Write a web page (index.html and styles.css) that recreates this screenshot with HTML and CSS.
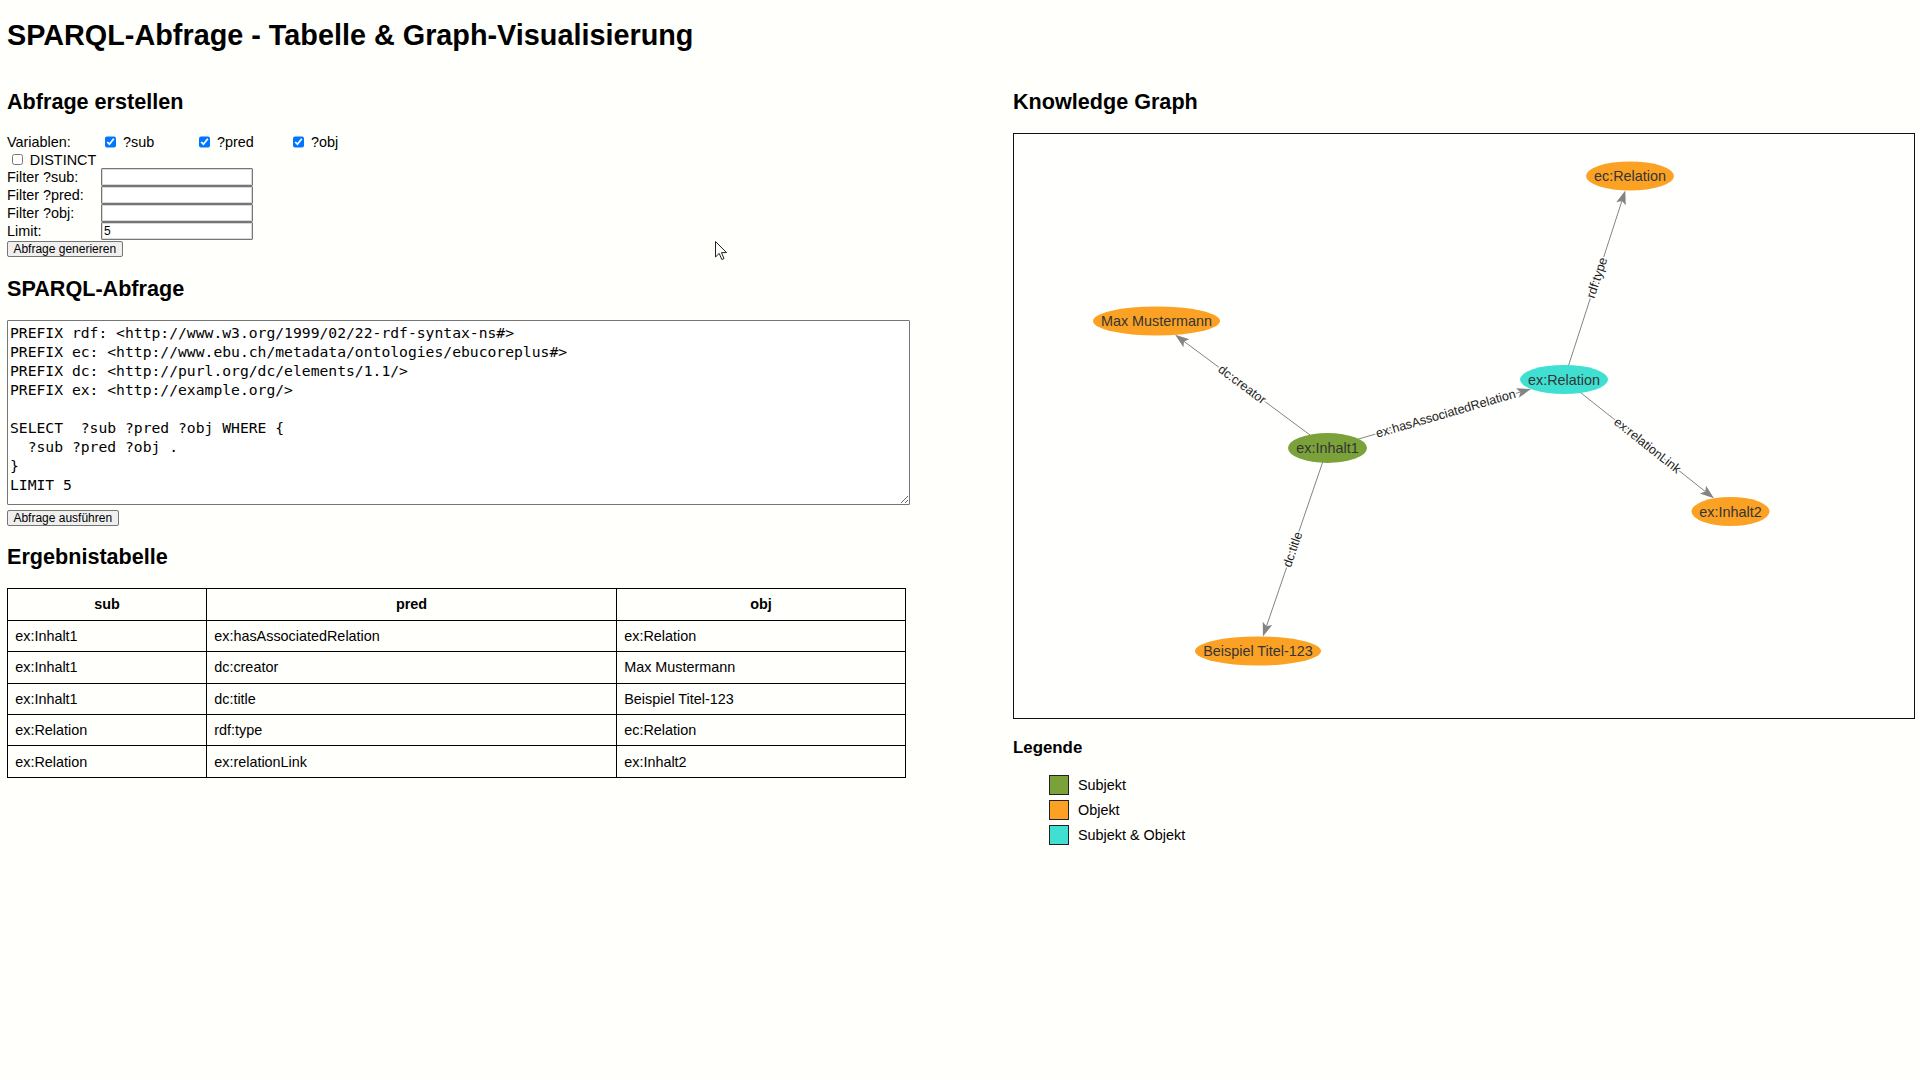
FILE: index.html
```html
<!DOCTYPE html>
<html lang="de">
<head>
<meta charset="utf-8">
<title>SPARQL-Abfrage - Tabelle &amp; Graph-Visualisierung</title>
<link rel="stylesheet" href="styles.css">
</head>
<body>
<h1 class="title">SPARQL-Abfrage - Tabelle &amp; Graph-Visualisierung</h1>
<div class="main">
  <div class="left">
    <h2 class="sec">Abfrage erstellen</h2>
    <div class="form">
      <div class="row row-vars">
        <span class="lbl">Variablen:</span>
        <label class="var"><input type="checkbox" class="cb" checked> ?sub</label>
        <label class="var"><input type="checkbox" class="cb" checked> ?pred</label>
        <label class="var"><input type="checkbox" class="cb" checked> ?obj</label>
      </div>
      <div class="row row-distinct">
        <label class="dist"><input type="checkbox" class="cb"> DISTINCT</label>
      </div>
      <div class="row row-input"><span class="lbl">Filter ?sub:</span><input type="text" class="txt"></div>
      <div class="row row-input"><span class="lbl">Filter ?pred:</span><input type="text" class="txt"></div>
      <div class="row row-input"><span class="lbl">Filter ?obj:</span><input type="text" class="txt"></div>
      <div class="row row-input"><span class="lbl">Limit:</span><input type="text" class="txt" value="5"></div>
      <button class="btn btn-gen">Abfrage generieren</button>
    </div>

    <h2 class="sec">SPARQL-Abfrage</h2>
    <textarea class="query" spellcheck="false">PREFIX rdf: &lt;http://www.w3.org/1999/02/22-rdf-syntax-ns#&gt;
PREFIX ec: &lt;http://www.ebu.ch/metadata/ontologies/ebucoreplus#&gt;
PREFIX dc: &lt;http://purl.org/dc/elements/1.1/&gt;
PREFIX ex: &lt;http://example.org/&gt;

SELECT  ?sub ?pred ?obj WHERE {
  ?sub ?pred ?obj .
}
LIMIT 5</textarea>
    <button class="btn btn-run">Abfrage ausführen</button>

    <h2 class="sec">Ergebnistabelle</h2>
    <table class="results">
      <colgroup><col class="c1"><col class="c2"><col class="c3"></colgroup>
      <thead>
        <tr><th>sub</th><th>pred</th><th>obj</th></tr>
      </thead>
      <tbody>
        <tr><td>ex:Inhalt1</td><td>ex:hasAssociatedRelation</td><td>ex:Relation</td></tr>
        <tr><td>ex:Inhalt1</td><td>dc:creator</td><td>Max Mustermann</td></tr>
        <tr><td>ex:Inhalt1</td><td>dc:title</td><td>Beispiel Titel-123</td></tr>
        <tr><td>ex:Relation</td><td>rdf:type</td><td>ec:Relation</td></tr>
        <tr><td>ex:Relation</td><td>ex:relationLink</td><td>ex:Inhalt2</td></tr>
      </tbody>
    </table>
  </div>

  <div class="right">
    <h2 class="sec">Knowledge Graph</h2>
    <div class="graph">
      <svg class="graph-svg" viewBox="0 0 900 584" width="900" height="584">
        <g class="edges">
          <line x1="313.5" y1="314" x2="506.4" y2="258.1"/>
          <line x1="313.5" y1="314" x2="170" y2="207.4"/>
          <line x1="313.5" y1="314" x2="252.5" y2="492.2"/>
          <line x1="550" y1="245.5" x2="607.9" y2="66.9"/>
          <line x1="550" y1="245.5" x2="691.3" y2="357.5"/>
        </g>
        <g class="arrows">
          <polygon points="516.95,255.07 504.89,263.76 506.38,258.13 502.11,254.16"/>
          <polygon points="161.16,200.86 175.38,205.19 169.99,207.41 169.42,213.21"/>
          <polygon points="248.95,502.55 248.75,487.69 252.51,492.15 258.21,490.93"/>
          <polygon points="611.32,56.42 611.76,71.28 607.93,66.89 602.24,68.2"/>
          <polygon points="699.94,364.37 685.86,359.59 691.32,357.53 692.08,351.75"/>
        </g>
        <g class="elabels">
          <text transform="translate(431.75 279.75) rotate(-16.15)">ex:hasAssociatedRelation</text>
          <text transform="translate(228 250.5) rotate(36.6)">dc:creator</text>
          <text transform="translate(278.75 415.5) rotate(-71.1)">dc:title</text>
          <text transform="translate(583 143.75) rotate(-72)">rdf:type</text>
          <text transform="translate(633.25 311.5) rotate(38.4)">ex:relationLink</text>
        </g>
        <g class="nodes">
          <ellipse class="n-obj" cx="616" cy="42" rx="44" ry="14.5"/>
          <text x="616" y="42">ec:Relation</text>
          <ellipse class="n-obj" cx="142.5" cy="187" rx="63.5" ry="14.5"/>
          <text x="142.5" y="187">Max Mustermann</text>
          <ellipse class="n-both" cx="550" cy="245.5" rx="44" ry="14.5"/>
          <text x="550" y="245.5">ex:Relation</text>
          <ellipse class="n-sub" cx="313.5" cy="314" rx="39.5" ry="15"/>
          <text x="313.5" y="314">ex:Inhalt1</text>
          <ellipse class="n-obj" cx="716.5" cy="377.5" rx="39" ry="14.5"/>
          <text x="716.5" y="377.5">ex:Inhalt2</text>
          <ellipse class="n-obj" cx="244" cy="517" rx="63" ry="14.5"/>
          <text x="244" y="517">Beispiel Titel-123</text>
        </g>
      </svg>
    </div>
    <h3 class="legend-title">Legende</h3>
    <ul class="legend">
      <li><span class="sw sw-sub"></span>Subjekt</li>
      <li><span class="sw sw-obj"></span>Objekt</li>
      <li><span class="sw sw-both"></span>Subjekt &amp; Objekt</li>
    </ul>
  </div>
</div>
<svg class="cursor" width="13" height="20" viewBox="0 0 13 20">
  <path d="M0.5,0.5 L0.5,16 L4.2,12.4 L6.8,18.5 L9,17.6 L6.5,11.6 L11.5,11.6 Z" fill="#fff" stroke="#222" stroke-width="1"/>
</svg>
</body>
</html>
```
FILE: styles.css
```css
html {
  background: #fffffc;
}
body {
  margin: 0;
  padding: 7px 5px 7px 7px;
  font-family: "Liberation Sans", Arial, sans-serif;
  font-size: 14.4px;
  color: #000;
  position: relative;
}
.title {
  font-size: 28.8px;
  font-weight: bold;
  margin: 12px 0 19.3px;
}
.main {
  display: grid;
  grid-template-columns: 903px 902px;
  justify-content: space-between;
}
.sec {
  font-size: 21.6px;
  font-weight: bold;
  margin: 17.9px 0;
}
.form {
  display: flex;
  flex-direction: column;
  align-items: flex-start;
}
.row {
  display: flex;
  align-items: center;
}
.row-vars { height: 18px; }
.row-distinct { height: 17px; }
.row-input { height: 18px; }
.lbl {
  width: 94px;
  flex: none;
}
.var {
  width: 94px;
  display: flex;
  align-items: center;
  white-space: pre;
}
.dist {
  display: flex;
  align-items: center;
  white-space: pre;
}
.cb {
  width: 11.7px;
  height: 11.7px;
  margin: 0 2.7px 0 3.6px;
  accent-color: #0075ff;
}
.dist .cb { margin-left: 4.5px; }
.txt {
  width: 152px;
  height: 18px;
  box-sizing: border-box;
  border: 1px solid #767676;
  box-shadow: inset 0 0 0 1px #d8d8d8;
  border-radius: 1px;
  padding: 0 2px;
  font-family: "Liberation Sans", Arial, sans-serif;
  font-size: 12px;
  background: #fff;
  margin: 0;
}
.btn {
  font-family: "Liberation Sans", Arial, sans-serif;
  font-size: 12px;
  height: 16px;
  padding: 0 5.4px;
  line-height: 14px;
  border: 1px solid #767676;
  border-radius: 2px;
  background: #efefef;
  color: #000;
}
.btn-gen { margin-top: 1px; margin-bottom: 1px; }
.query {
  display: block;
  width: 903px;
  height: 185px;
  box-sizing: border-box;
  margin: 4.5px 0 0 0;
  padding: 2px;
  border: 1px solid #767676;
  border-radius: 1px;
  font-family: "DejaVu Sans Mono", "Liberation Mono", monospace;
  font-size: 14.7px;
  line-height: 19px;
  color: #000;
  background: #fff;
  resize: vertical;
}
.btn-run { margin-top: 5px; margin-bottom: 1.5px; display: block; }
.results {
  border-collapse: collapse;
  table-layout: fixed;
  width: 898px;
  margin-top: 4.5px;
}
.results .c1 { width: 199px; }
.results .c2 { width: 410px; }
.results .c3 { width: 289px; }
.results th, .results td {
  border: 1px solid #000;
  padding: 7.2px 7.2px;
  font-size: 14.4px;
  text-align: left;
}
.results th {
  text-align: center;
  font-weight: bold;
  padding: 7.6px 7.2px;
}
.graph {
  border: 1px solid #111;
  height: 584px;
  margin-top: 1.2px;
  background: #fffffd;
}
.graph-svg { display: block; }
.edges line {
  stroke: #848484;
  stroke-width: 1;
}
.arrows polygon {
  fill: #848484;
}
.elabels text {
  font-family: "Liberation Sans", Arial, sans-serif;
  font-size: 12.6px;
  fill: #222;
  stroke: #fffffd;
  stroke-width: 3;
  paint-order: stroke;
  text-anchor: middle;
  dominant-baseline: central;
}
.nodes text {
  font-family: "Liberation Sans", Arial, sans-serif;
  font-size: 14.4px;
  fill: #343434;
  text-anchor: middle;
  dominant-baseline: central;
}
.n-obj { fill: #fba224; }
.n-sub { fill: #7ba23a; }
.n-both { fill: #3fe0d2; }
.legend-title {
  font-size: 16.85px;
  font-weight: bold;
  margin: 19px 0 16.85px;
}
.legend {
  list-style: none;
  margin: 0;
  padding: 0 0 0 36px;
}
.legend li {
  display: flex;
  align-items: center;
  margin: 5px 0 4.5px;
  height: 20px;
}
.sw {
  width: 20px;
  height: 20px;
  box-sizing: border-box;
  border: 1px solid #222;
  margin-right: 9px;
  flex: none;
}
.sw-sub { background: #7ba23a; }
.sw-obj { background: #fba224; }
.sw-both { background: #3fe0d2; }
.cursor {
  position: absolute;
  left: 715px;
  top: 241px;
}
```
